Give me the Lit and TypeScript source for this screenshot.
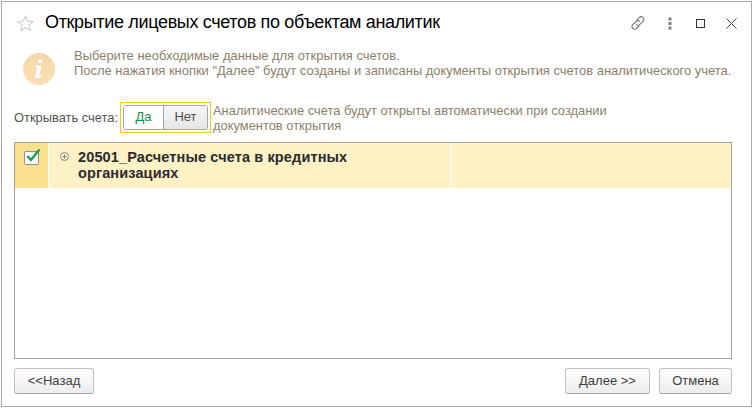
import { LitElement, html, css } from "lit";
import { customElement } from "lit/decorators.js";

@customElement("app-root")
export class AppRoot extends LitElement {
  static styles = css`
    :host { display: block; width: 753px; height: 410px; background: #fff; font-family: "Liberation Sans", Arial, sans-serif; box-sizing: border-box; padding: 1px 1px 3px 1px; }
    .win { box-sizing: border-box; height: 100%; border: 1px solid #aaa; background: #fff; display: flex; flex-direction: column; padding: 0 19px 12px 12px; }
    .head { display: flex; align-items: center; height: 42px; flex: none; margin-right: -19px; }
    .star { margin: 0 11px 0 3px; display: block; }
    .title { font-size: 18px; letter-spacing: -0.34px; color: #000; flex: 1; white-space: nowrap; position: relative; top: -0.5px; }
    .tools { display: flex; align-items: center; }
    .tools svg { display: block; }
    .link { margin-right: 22px; }
    .dots { margin-right: 24px; }
    .max { margin-right: 21px; }
    .close { margin-right: 14px; }
    .info { display: flex; height: 38px; flex: none; }
    .ic { width: 60px; flex: none; padding: 9px 0 0 9px; box-sizing: border-box; }
    .msg { font-size: 12.95px; line-height: 15px; color: #8c8168; padding-top: 4px; white-space: nowrap; }
    .open { display: flex; height: 39px; align-items: flex-start; margin-top: 21px; flex: none; }
    .lab { font-size: 12.9px; color: #55554f; width: 106px; flex: none; padding-top: 7px; white-space: nowrap; }
    .frame { box-sizing: border-box; border: 1px solid #f5c518; width: 91px; height: 31px; padding: 2px; flex: none; margin-top: -1px; }
    .seg { box-sizing: border-box; height: 25px; display: flex; border: 1px solid #a6a6a6; border-radius: 3px; font-size: 13px; line-height: 21px; text-align: center; }
    .yes { width: 39px; color: #0a9050; background: #fff; border-right: 1px solid #a6a6a6; border-radius: 2px 0 0 2px; }
    .no { flex: 1; color: #4d4d4d; background: linear-gradient(#f7f7f7, #e6e6e6); border-radius: 0 2px 2px 0; }
    .note { font-size: 12.9px; line-height: 15px; color: #8c8168; margin-left: 2px; width: 430px; }
    .table { box-sizing: border-box; flex: 1; border: 1px solid #a3a3a3; margin-top: 0; background: #fff; min-height: 0; }
    .row { display: flex; height: 45px; }
    .c1 { width: 33px; flex: none; background: #fbe08d; border-right: 1px solid #fff; box-sizing: content-box; padding: 5px 0 0 0; height: 40px; }
    .c1 svg { display: block; margin-left: 9px; }
    .c2 { width: 402px; flex: none; box-sizing: border-box; background: #fdf1c6; border-right: 1px solid #fff; display: flex; padding: 6px 0 0 11px; }
    .c2 svg { flex: none; display: block; margin: 3px 9px 0 0; }
    .name { font-size: 14.5px; letter-spacing: 0.13px; line-height: 16px; font-weight: bold; color: #2b2b2b; width: 330px; }
    .c3 { flex: 1; background: #fdf1c6; }
    .foot { display: flex; justify-content: space-between; flex: none; margin-top: 9px; }
    .group { display: flex; gap: 9px; }
    .btn { box-sizing: border-box; height: 26px; border: 1px solid #c2c2c2; border-bottom-color: #a8a8a8; border-radius: 3px; background: linear-gradient(#ffffff, #ececec); font-size: 13px; line-height: 24px; text-align: center; color: #3f3f3f; white-space: nowrap; }
    .b1 { width: 80px; }
    .b2 { width: 85px; }
    .b3 { width: 73px; }
  `;

  render() {
    return html`
      <div class="win">
        <div class="head">
          <svg class="star" width="17" height="16" viewBox="0 0 18 17">
            <path d="M9 1.2l2.3 5.2 5.6.6-4.2 3.8 1.2 5.5L9 13.5l-4.9 2.8 1.2-5.5L1.1 7l5.6-.6z" fill="none" stroke="#c3cad0" stroke-width="1.1"/>
          </svg>
          <div class="title">Открытие лицевых счетов по объектам аналитик</div>
          <div class="tools">
            <svg class="link" width="16" height="16" viewBox="0 0 16 16" fill="none" stroke="#777" stroke-width="1.1" stroke-linecap="round">
              <path d="M6.6 5.2l2.6-2.6a2.6 2.6 0 0 1 3.9 3.6L9.7 9.7a2.3 2.3 0 0 1-3.3-.2"/>
              <path d="M9.4 6.4a2.3 2.3 0 0 0-3.3-.1L2.8 9.7a2.6 2.6 0 0 0 3.8 3.7l2.3-2.4"/>
            </svg>
            <svg class="dots" width="4" height="13" viewBox="0 0 4 13" fill="#808080">
              <rect x="0.5" y="0.5" width="3" height="3"/><rect x="0.5" y="5" width="3" height="3"/><rect x="0.5" y="9.5" width="3" height="3"/>
            </svg>
            <svg class="max" width="9" height="9" viewBox="0 0 9 9" fill="none" stroke="#333" stroke-width="1">
              <rect x="0.5" y="0.5" width="8" height="8"/>
            </svg>
            <svg class="close" width="11" height="11" viewBox="0 0 11 11" fill="none" stroke="#444" stroke-width="1">
              <path d="M0.5 0.5l10 10M10.5 0.5l-10 10"/>
            </svg>
          </div>
        </div>
        <div class="info">
          <div class="ic">
            <svg width="32" height="32" viewBox="0 0 32 32">
              <defs><linearGradient id="g" x1="0" y1="0" x2="0" y2="1"><stop offset="0" stop-color="#f5d6a3"/><stop offset="1" stop-color="#fae0b9"/></linearGradient></defs>
              <circle cx="16" cy="16" r="16" fill="url(#g)"/>
              <path d="M15.6 6.5h4l-.7 3.4h-4zM12.6 12.6h6l-2.3 10 2.1-.2-.4 2.3h-6.2l2.4-10.3-2 .2z" fill="#fff"/>
            </svg>
          </div>
          <div class="msg">Выберите необходимые данные для открытия счетов.<br>После нажатия кнопки "Далее" будут созданы и записаны документы открытия счетов аналитического учета.</div>
        </div>
        <div class="open">
          <div class="lab">Открывать счета:</div>
          <div class="frame">
            <div class="seg"><div class="yes">Да</div><div class="no">Нет</div></div>
          </div>
          <div class="note">Аналитические счета будут открыты автоматически при создании документов открытия</div>
        </div>
        <div class="table">
          <div class="row">
            <div class="c1">
              <svg width="17" height="17" viewBox="0 0 17 17">
                <rect x="0.5" y="3.5" width="14" height="13" rx="1.5" fill="#fff" stroke="#8e8e8e"/>
                <path d="M3.5 8l3.4 4L15.5 1.5" fill="none" stroke="#12a04f" stroke-width="2.4"/>
              </svg>
            </div>
            <div class="c2">
              <svg width="9" height="9" viewBox="0 0 9 9" fill="none" stroke="#8a8a8a" stroke-width="1">
                <circle cx="4.5" cy="4.5" r="4"/><path d="M2.2 4.5h4.6M4.5 2.2v4.6"/>
              </svg>
              <div class="name">20501_Расчетные счета в кредитных организациях</div>
            </div>
            <div class="c3"></div>
          </div>
        </div>
        <div class="foot">
          <div class="btn b1">&lt;&lt;Назад</div>
          <div class="group">
            <div class="btn b2">Далее &gt;&gt;</div>
            <div class="btn b3">Отмена</div>
          </div>
        </div>
      </div>
    `;
  }
}
